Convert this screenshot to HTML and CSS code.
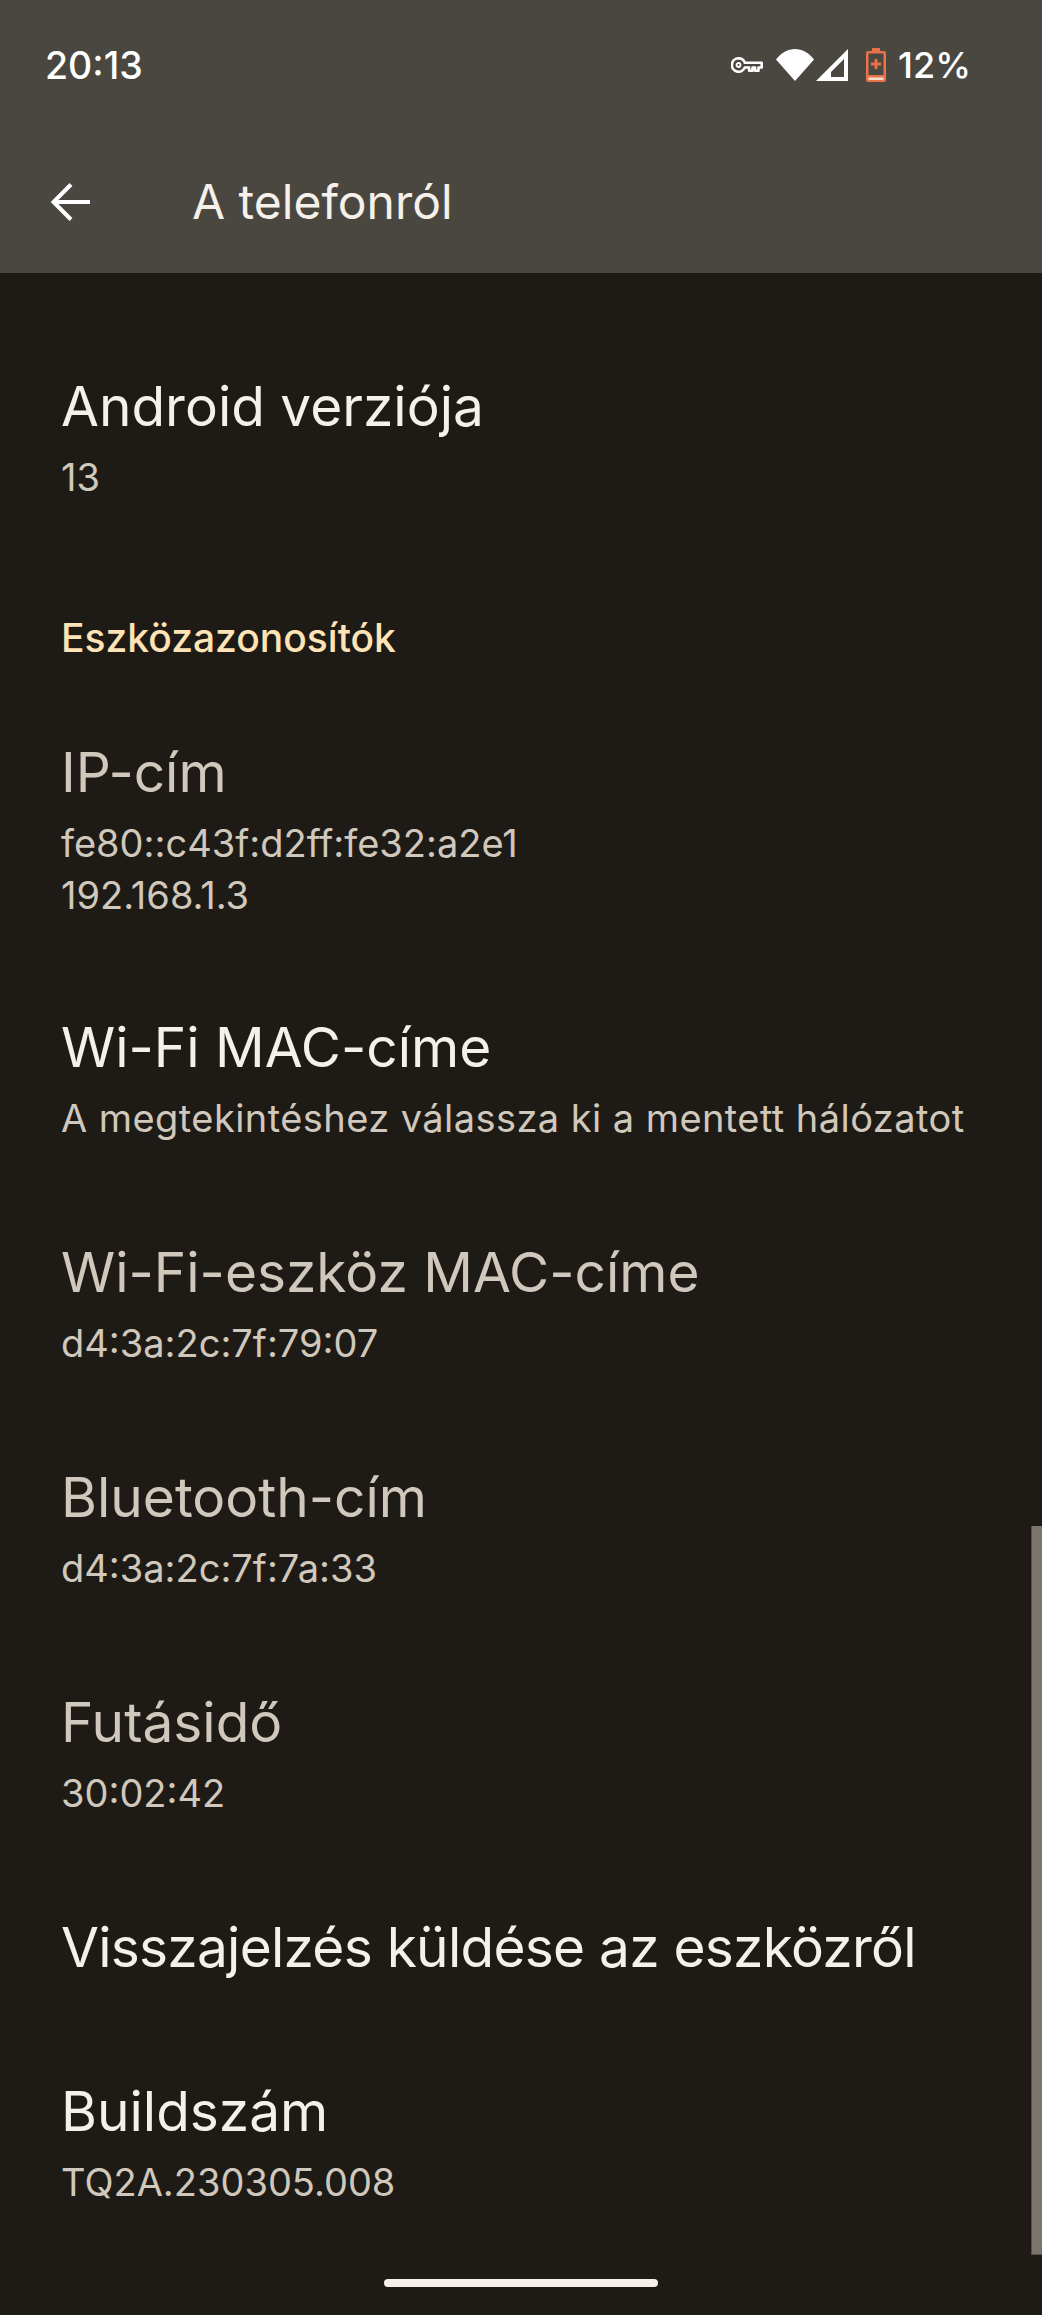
FILE: index.html
```html
<!DOCTYPE html>
<html lang="hu">
<head>
    <meta charset="UTF-8">
    <meta name="viewport" content="width=device-width, initial-scale=1.0">
    <title>A telefonról</title>
    <link rel="stylesheet" href="styles.css">
</head>
<body>
    <header class="top">
        <div class="status-bar">
            <span class="clock">20:13</span>
            <div class="status-icons">
                <svg class="icon-key" viewBox="0 0 32 16" width="32" height="16">
                    <path d="M7.500 1.300a6.700 6.700 0 0 1 6.300 4.400h16.900v4.800h-3.200v3.300h-3.400v-3.300h-2.600v3.300h-3.400v-3.300h-4.300a6.700 6.700 0 1 1-6.300-9.200z" fill="none" stroke="#fff" stroke-width="2.600" stroke-linejoin="round"/>
                    <circle cx="7.500" cy="8" r="2" fill="none" stroke="#fff" stroke-width="1.800"/>
                </svg>
                <svg class="icon-wifi" viewBox="0 0 38 32" width="38" height="32">
                    <path d="M19 32 0 10.500C5 4 12 0 19 0s14 4 19 10.500z" fill="#fff"/>
                </svg>
                <svg class="icon-signal" viewBox="0 0 32 32" width="32" height="32">
                    <path d="M32 0v32H0zM28 10 15 23v5h13z" fill="#fff" fill-rule="evenodd"/>
                </svg>
                <svg class="icon-battery" viewBox="0 0 20 34" width="20" height="34">
                    <path d="M6 0h8v3h4a2 2 0 0 1 2 2v27a2 2 0 0 1-2 2H2a2 2 0 0 1-2-2V5a2 2 0 0 1 2-2h4zM2.500 5.500v21.500h15V5.500z" fill="#e8734a" fill-rule="evenodd"/>
                    <path d="M8.500 11h3v3.500H15v3h-3.500V21h-3v-3.500H5v-3h3.500z" fill="#e8734a"/>
                    <path d="M2.500 29.500h15V32h-15z" fill="#f6dccf"/>
                </svg>
                <span class="battery-pct">12%</span>
            </div>
        </div>
        <div class="app-bar">
            <svg class="icon-back" viewBox="0 0 42 40" width="42" height="40">
                <path d="M40 20H4M21 2.500 3.500 20 21 37.500" fill="none" stroke="#fff" stroke-width="4"/>
            </svg>
            <h1>A telefonról</h1>
        </div>
    </header>

    <main class="list">
        <div class="row">
            <div class="row-title">Android verziója</div>
            <div class="row-sub">13</div>
        </div>

        <div class="section-title">Eszközazonosítók</div>

        <div class="row row-multi muted">
            <div class="row-title">IP-cím</div>
            <div class="row-sub">fe80::c43f:d2ff:fe32:a2e1<br>192.168.1.3</div>
        </div>
        <div class="row">
            <div class="row-title">Wi-Fi MAC-címe</div>
            <div class="row-sub row-sub-wide">A megtekintéshez válassza ki a mentett hálózatot</div>
        </div>
        <div class="row muted">
            <div class="row-title">Wi-Fi-eszköz MAC-címe</div>
            <div class="row-sub">d4:3a:2c:7f:79:07</div>
        </div>
        <div class="row muted">
            <div class="row-title">Bluetooth-cím</div>
            <div class="row-sub">d4:3a:2c:7f:7a:33</div>
        </div>
        <div class="row muted">
            <div class="row-title">Futásidő</div>
            <div class="row-sub">30:02:42</div>
        </div>
        <div class="row">
            <div class="row-title row-title-tight">Visszajelzés küldése az eszközről</div>
        </div>
        <div class="row">
            <div class="row-title">Buildszám</div>
            <div class="row-sub">TQ2A.230305.008</div>
        </div>
    </main>

    <div class="scroll-thumb"></div>
    <div class="home-pill"></div>
</body>
</html>
```

FILE: styles.css
```css
* {
    box-sizing: border-box;
    margin: 0;
    padding: 0;
}

html, body {
    height: 100%;
    overflow: hidden;
}

body {
    position: relative;
    font-family: 'Inter', 'Roboto', sans-serif;
    background-color: #1e1b16;
    color: #f5f0ea;
}

.top {
    height: 273px;
    background-color: #4a4741;
}

.status-bar {
    height: 130px;
    padding: 0 71px 0 45px;
    display: flex;
    align-items: center;
    justify-content: space-between;
}

.clock {
    font-size: 37.500px;
    font-weight: 500;
    color: #fff;
}

.status-icons {
    display: flex;
    align-items: center;
}

.icon-key {
    margin-right: 13px;
}

.icon-wifi {
    margin-right: 2px;
}

.icon-battery {
    margin-left: 18px;
    margin-right: 12px;
}

.battery-pct {
    font-size: 36px;
    font-weight: 500;
    color: #fff;
}

.app-bar {
    height: 143px;
    padding: 0 0 0 50px;
    display: flex;
    align-items: center;
}

.app-bar h1 {
    margin-left: 100px;
    font-size: 48px;
    font-weight: 400;
    color: #f5f0ea;
}

.list {
    padding-top: 51px;
}

.row {
    padding: 46px 61px;
}

.row-multi {
    padding-bottom: 44px;
}

.row-title {
    font-size: 55px;
    line-height: 72px;
    font-weight: 400;
}

.row-title-tight {
    letter-spacing: -0.750px;
}

.row-sub {
    margin-top: 9px;
    font-size: 38px;
    line-height: 52px;
    color: #d0c8bc;
}

.row-sub-wide {
    letter-spacing: 0.430px;
}

.row.muted .row-title {
    color: #d0c8bc;
}

.section-title {
    padding: 62px 61px 25px;
    font-size: 39px;
    line-height: 54px;
    font-weight: 500;
    color: #fde3b5;
}

.scroll-thumb {
    position: absolute;
    top: 1526px;
    right: 0;
    width: 11px;
    height: 729px;
    background-color: #7b746b;
    border-left: 1px solid #55514a;
    border-bottom: 1px solid #55514a;
}

.home-pill {
    position: absolute;
    left: 384px;
    top: 2279px;
    width: 274px;
    height: 8px;
    border-radius: 4px;
    background-color: #f5f0ea;
}
```
